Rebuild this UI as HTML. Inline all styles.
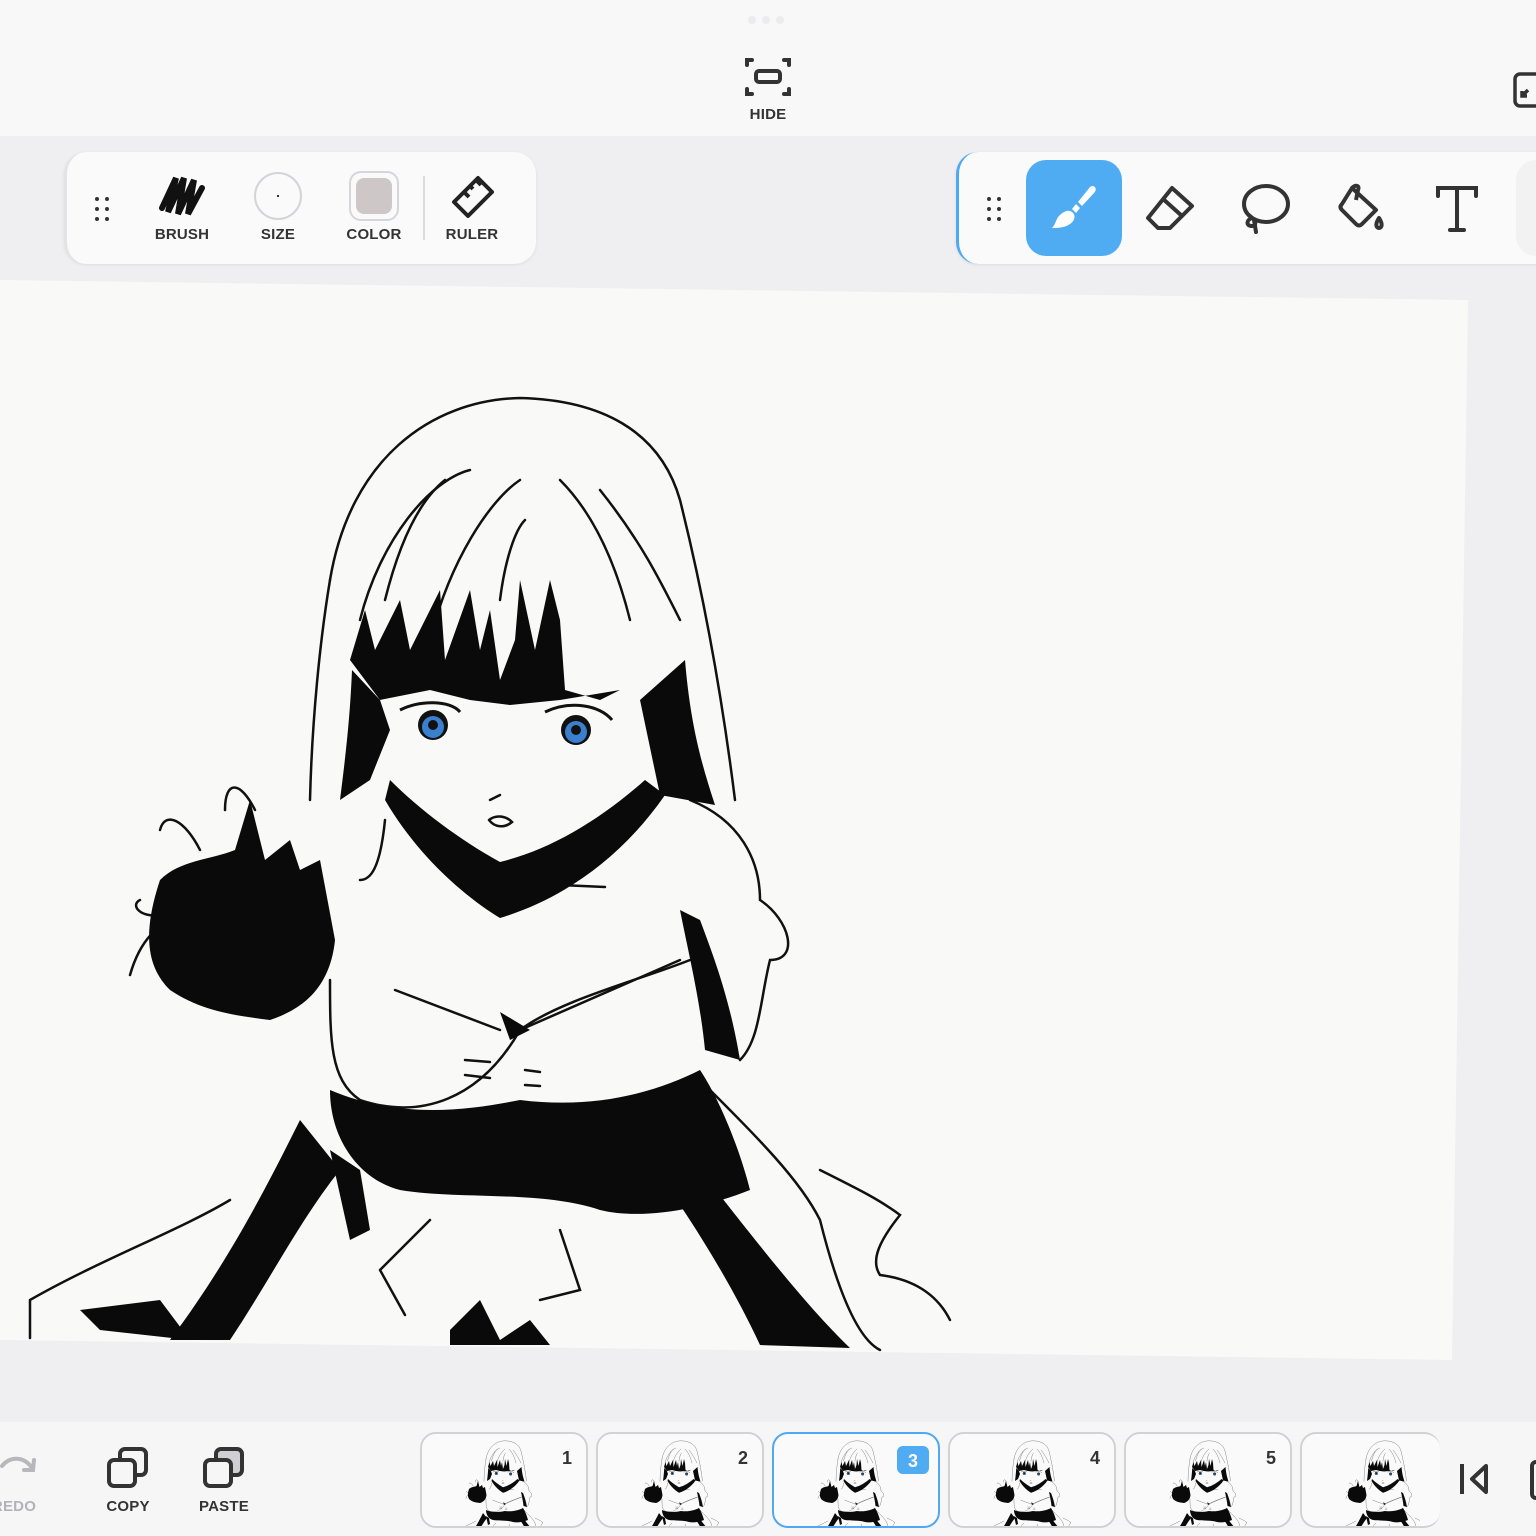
<!DOCTYPE html>
<html><head><meta charset="utf-8"><style>
*{margin:0;padding:0;box-sizing:border-box}
body{width:1536px;height:1536px;overflow:hidden;background:#efeff1;font-family:"Liberation Sans",sans-serif;position:relative}
.top{position:absolute;left:0;top:0;width:1536px;height:136px;background:#f8f8f9}
.lbl{position:absolute;font-weight:700;font-size:15px;color:#333;letter-spacing:.2px;text-align:center}
.pill{position:absolute;background:#fafafa;border-radius:22px;box-shadow:0 1px 3px rgba(0,0,0,.08)}
.bot{position:absolute;left:0;top:1422px;width:1536px;height:114px;background:#f6f6f7}
.fr{position:absolute;top:1432px;width:168px;height:96px;border:2px solid #d2d2d6;border-radius:16px;background:#fafafa;overflow:hidden}
.fr .n{position:absolute;right:14px;top:14px;font-weight:700;font-size:18px;color:#333}
</style></head><body>
<div class="top"></div>
<div style="position:absolute;left:748px;top:16px;width:40px;height:6px;display:flex;gap:6px"><i style="width:8px;height:8px;border-radius:4px;background:#ececee"></i><i style="width:8px;height:8px;border-radius:4px;background:#ececee"></i><i style="width:8px;height:8px;border-radius:4px;background:#ececee"></i></div>
<svg style="position:absolute;left:744px;top:56px" width="48" height="42" viewBox="0 0 48 42" fill="none" stroke="#333" stroke-width="4" stroke-linecap="round"><path d="M3 9V4h5M40 4h5v5M3 33v5h5M40 38h5v-5"/><rect x="12" y="15" width="24" height="11" rx="3"/></svg>
<div class="lbl" style="left:740px;top:106px;width:56px">HIDE</div>
<svg style="position:absolute;left:1512px;top:72px" width="30" height="36" fill="none" stroke="#333" stroke-width="3.5"><rect x="3" y="2" width="30" height="32" rx="5"/><path d="M16 18l-6 6M10 19v5h5"/></svg>

<!-- canvas paper -->
<svg style="position:absolute;left:0;top:0" width="1536" height="1536">
<defs><g id="girl">
<g fill="none" stroke="#111" stroke-width="2.5" stroke-linecap="round">
<path d="M330,580 C350,460 430,400 520,398 C600,400 660,430 680,500 C700,580 720,680 735,800"/>
<path d="M330,580 C320,640 312,720 310,800"/>
<path d="M360,620 C380,540 430,480 470,470"/>
<path d="M385,600 C400,540 420,500 445,480"/>
<path d="M430,640 C450,560 490,500 520,480"/>
<path d="M560,480 C600,520 620,580 630,620"/>
<path d="M600,490 C640,540 660,580 680,620"/>
<path d="M500,600 C505,560 515,530 525,520"/>
<path d="M385,820 C380,870 370,880 360,880"/>
<path d="M690,800 C740,820 760,860 760,900 C790,920 800,960 770,960 C760,1000 760,1040 740,1060"/>
<path d="M330,980 C330,1040 330,1080 360,1100 C420,1120 480,1100 520,1030 C560,1000 640,980 690,960"/>
<path d="M395,990 L500,1030 M520,1030 L680,960"/>
<path d="M700,1080 C760,1140 800,1180 820,1220 C840,1300 860,1340 880,1350"/>
<path d="M820,1170 C860,1190 880,1200 900,1215 C880,1240 870,1260 880,1275 C920,1280 940,1300 950,1320"/>
<path d="M30,1300 C100,1260 180,1230 230,1200 M30,1300 L30,1338"/>
<path d="M380,1270 L430,1220 M380,1270 L405,1315 M560,1230 L580,1290 L540,1300"/>
<path d="M560,885 L605,887"/>
<path d="M465,1060 L490,1062 M465,1075 L490,1078 M525,1070 L540,1072 M525,1085 L540,1086"/>
<path d="M490,800 L500,795 M489,820 C495,815 505,815 512,822 C505,828 495,828 489,820"/>
<path d="M225,810 C225,780 240,780 255,810 M160,830 C165,810 185,820 200,850 M140,900 C130,905 140,918 160,915"/>
<path d="M130,975 C140,940 160,920 180,920"/>
</g>
<g fill="#0a0a0a">
<path d="M350,660 L365,610 L375,650 L400,600 L410,650 L440,590 L445,660 L470,590 L480,650 L490,610 L500,680 L515,640 L520,580 L535,650 L550,580 L560,620 L565,690 L600,700 L620,690 L560,700 L510,705 L470,700 L430,690 L380,700 Z"/>
<path d="M352,670 C350,720 345,760 340,800 L370,780 L390,730 L380,700 Z"/>
<path d="M640,700 L685,660 C690,720 700,760 715,805 L660,795 Z"/>
<path d="M385,800 C420,860 470,900 500,918 C560,900 620,860 665,795 L645,780 C600,820 550,850 500,862 C460,840 420,810 390,780 Z"/>
<path d="M160,880 C180,860 210,860 235,850 L250,800 L265,860 L290,840 L300,870 L320,860 L335,940 C330,990 300,1010 270,1020 C230,1015 200,1010 170,990 C150,970 140,940 160,880 Z"/>
<path d="M330,1090 C400,1120 470,1110 520,1100 C600,1110 660,1090 700,1070 C720,1100 740,1150 750,1190 C700,1210 640,1220 600,1210 C540,1190 460,1200 400,1190 C360,1180 330,1140 330,1090 Z"/>
<path d="M680,910 C690,960 700,1000 705,1050 L740,1060 C730,1000 715,960 700,920 Z"/>
<path d="M300,1120 C270,1180 230,1260 170,1340 L230,1340 C270,1280 300,1220 340,1170 Z"/>
<path d="M80,1310 L160,1300 L190,1340 L100,1330 Z"/>
<path d="M640,1150 C680,1200 730,1280 760,1345 L850,1348 C800,1300 740,1220 700,1170 Z"/>
<path d="M450,1330 L480,1300 L500,1340 L530,1320 L550,1345 L450,1345 Z"/>
<path d="M330,1150 L350,1240 L370,1230 L360,1170 Z"/>
<path d="M500,1012 L510,1040 L530,1030 Z"/>
</g>
<g><circle cx="433" cy="725" r="15" fill="#111"/><circle cx="433" cy="727" r="11" fill="#3b7fcf"/><circle cx="433" cy="725" r="5" fill="#111"/>
<circle cx="576" cy="730" r="15" fill="#111"/><circle cx="576" cy="732" r="11" fill="#3b7fcf"/><circle cx="576" cy="730" r="5" fill="#111"/>
<path d="M400,710 C420,700 450,700 460,712 M545,712 C570,700 600,705 612,720" stroke="#111" stroke-width="3" fill="none"/></g>
</g></defs>
<polygon points="0,280 1468,300 1452,1360 0,1340" fill="#f9f9f8"/>
<use href="#girl"/>
</svg>

<!-- left toolbar -->
<div class="pill" style="left:64px;top:152px;width:472px;height:112px;border-left:3px solid #e4e4e6"></div>
<svg style="position:absolute;left:94px;top:196px" width="16" height="26" fill="#333"><circle cx="3" cy="3" r="2"/><circle cx="13" cy="3" r="2"/><circle cx="3" cy="13" r="2"/><circle cx="13" cy="13" r="2"/><circle cx="3" cy="23" r="2"/><circle cx="13" cy="23" r="2"/></svg>
<svg style="position:absolute;left:158px;top:172px" width="50" height="48" fill="none" stroke="#111" stroke-width="6" stroke-linecap="round"><path d="M4,36 L18,6 L10,40 L26,6 L20,42 L36,8 L30,42 L44,16"/></svg>
<div class="lbl" style="left:146px;top:226px;width:72px">BRUSH</div>
<div style="position:absolute;left:254px;top:172px;width:48px;height:48px;border:2px solid #d4d4d8;border-radius:50%"></div>
<div style="position:absolute;left:277px;top:195px;width:2px;height:2px;background:#333"></div>
<div class="lbl" style="left:250px;top:226px;width:56px">SIZE</div>
<div style="position:absolute;left:349px;top:171px;width:50px;height:50px;border:2px solid #d6d6da;border-radius:12px;background:#fafafa"><div style="margin:5px;width:36px;height:36px;border-radius:8px;background:#cdc7c7"></div></div>
<div class="lbl" style="left:336px;top:226px;width:76px">COLOR</div>
<div style="position:absolute;left:423px;top:176px;width:2px;height:64px;background:#dcdcde"></div>
<svg style="position:absolute;left:450px;top:174px" width="46" height="46" fill="none" stroke="#222" stroke-width="4" stroke-linejoin="round"><path d="M4,28 L28,4 L42,18 L18,42 Z M14,18 L19,23 M20,12 L23,15 M26,6 L31,11"/></svg>
<div class="lbl" style="left:436px;top:226px;width:72px">RULER</div>

<!-- right toolbar -->
<div class="pill" style="left:956px;top:152px;width:600px;height:112px;border-left:3px solid #4fa9f2"></div>
<svg style="position:absolute;left:986px;top:196px" width="16" height="26" fill="#333"><circle cx="3" cy="3" r="2"/><circle cx="13" cy="3" r="2"/><circle cx="3" cy="13" r="2"/><circle cx="13" cy="13" r="2"/><circle cx="3" cy="23" r="2"/><circle cx="13" cy="23" r="2"/></svg>
<div style="position:absolute;left:1026px;top:160px;width:96px;height:96px;border-radius:20px;background:#4fabf2"></div>
<svg style="position:absolute;left:1048px;top:182px" width="52" height="52" fill="#fff"><path d="M44,4 C48,4 49,8 46,11 L34,24 L30,20 L42,5 Z"/><path d="M28,22 L32,26 L28,31 L24,27 Z"/><path d="M22,29 C28,31 28,38 22,42 C16,46 10,46 4,46 C8,42 8,36 12,33 C15,30 19,28 22,29 Z"/></svg>
<svg style="position:absolute;left:1144px;top:184px" width="54" height="50" fill="none" stroke="#333" stroke-width="4" stroke-linejoin="round"><path d="M28,4 L48,22 L26,44 L14,44 L4,34 Z M18,14 L38,32"/></svg>
<svg style="position:absolute;left:1240px;top:182px" width="54" height="56" fill="none" stroke="#333" stroke-width="4" stroke-linecap="round"><ellipse cx="26" cy="22" rx="22" ry="18"/><path d="M12,36 C6,38 6,44 12,44 C16,44 16,40 14,38 L16,50"/></svg>
<svg style="position:absolute;left:1336px;top:182px" width="54" height="56" fill="none" stroke="#333" stroke-width="4" stroke-linejoin="round"><path d="M16,6 L40,28 L26,42 C24,44 22,44 20,42 L6,28 C4,26 4,24 6,22 Z"/><path d="M16,6 C20,2 24,4 22,8 L20,18"/><path d="M43,36 C47,42 46,46 43,46 C40,46 39,42 43,36 Z"/></svg>
<svg style="position:absolute;left:1434px;top:184px" width="46" height="50" fill="none" stroke="#333" stroke-width="4" stroke-linecap="round"><path d="M4,12 V4 H42 V12 M23,4 V46 M16,46 H30"/></svg>
<div class="pill" style="left:1516px;top:160px;width:40px;height:96px;background:#f2f2f3;border-radius:20px;box-shadow:none"></div>

<!-- bottom -->
<div class="bot"></div>
<svg style="position:absolute;left:0;top:1452px" width="40" height="30" fill="none" stroke="#b8b8bc" stroke-width="4" stroke-linecap="round"><path d="M2,14 C10,4 24,4 32,16 M34,8 L33,18 L24,18"/></svg>
<div class="lbl" style="left:-14px;top:1498px;width:56px;color:#b3b3b7">REDO</div>
<svg style="position:absolute;left:106px;top:1446px" width="44" height="44" fill="none" stroke="#333" stroke-width="4"><rect x="14" y="3" width="26" height="26" rx="5"/><rect x="3" y="14" width="26" height="26" rx="5" fill="#f6f6f7"/></svg>
<div class="lbl" style="left:96px;top:1498px;width:64px">COPY</div>
<svg style="position:absolute;left:202px;top:1446px" width="44" height="44" fill="none" stroke="#333" stroke-width="4"><rect x="14" y="3" width="26" height="26" rx="5" fill="#d0d0d4"/><rect x="3" y="14" width="26" height="26" rx="5" fill="#f6f6f7"/></svg>
<div class="lbl" style="left:188px;top:1498px;width:72px">PASTE</div>

<div class="fr" style="left:420px"><div class="n">1</div></div>
<div class="fr" style="left:596px"><div class="n">2</div></div>
<div class="fr" style="left:772px;border-color:#4fa9f2"></div>
<div class="fr" style="left:948px"><div class="n">4</div></div>
<div class="fr" style="left:1124px"><div class="n">5</div></div>
<div class="fr" style="left:1300px;width:140px;border-right:none"></div>
<svg style="position:absolute;left:0;top:0;pointer-events:none" width="1536" height="1536">
<defs><clipPath id="cb"><rect x="0" y="1434" width="1420" height="92"/></clipPath></defs>
<g clip-path="url(#cb)">
<use href="#girl" transform="translate(453,1401) scale(0.1)"/>
<use href="#girl" transform="translate(629,1401) scale(0.1)"/>
<use href="#girl" transform="translate(805,1401) scale(0.1)"/>
<use href="#girl" transform="translate(981,1401) scale(0.1)"/>
<use href="#girl" transform="translate(1157,1401) scale(0.1)"/>
<use href="#girl" transform="translate(1333,1401) scale(0.1)"/>
</g>
<rect x="897" y="1446" width="32" height="28" rx="6" fill="#4fabf2"/>
<text x="913" y="1467" text-anchor="middle" font-family="Liberation Sans" font-weight="700" font-size="18" fill="#fff">3</text>
<path d="M1462,1464 V1494 M1486,1466 L1472,1479 L1486,1492 Z" fill="none" stroke="#333" stroke-width="4" stroke-linejoin="round"/>
<rect x="1532" y="1462" width="10" height="36" rx="4" fill="none" stroke="#333" stroke-width="4"/>
</svg>
</body></html>
